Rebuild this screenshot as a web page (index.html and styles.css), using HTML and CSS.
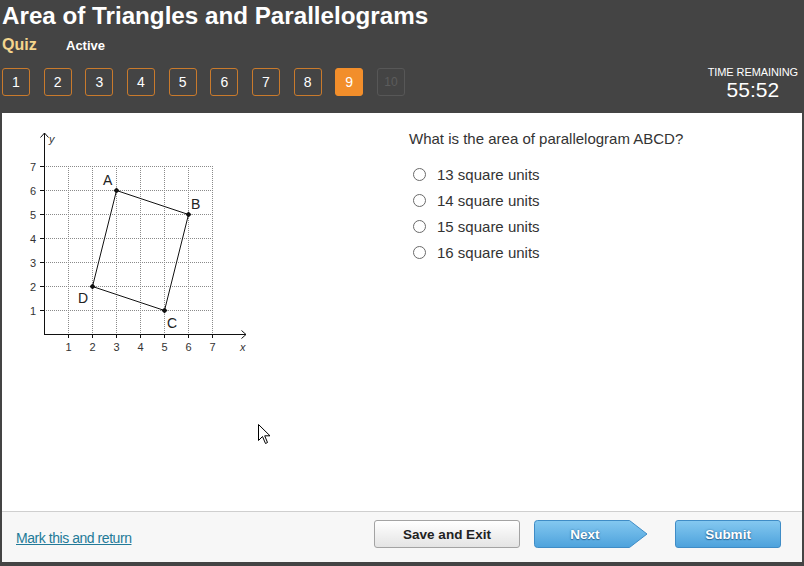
FILE: index.html
```html
<!DOCTYPE html>
<html>
<head>
<meta charset="utf-8">
<link rel="stylesheet" href="styles.css">
</head>
<body>
<div class="page">
  <header class="header">
    <h1 class="title">Area of Triangles and Parallelograms</h1>
    <div class="sub">
      <span class="quiz">Quiz</span>
      <span class="status">Active</span>
    </div>
    <div class="navrow">
      <div class="nums">
        <span class="num">1</span>
        <span class="num">2</span>
        <span class="num">3</span>
        <span class="num">4</span>
        <span class="num">5</span>
        <span class="num">6</span>
        <span class="num">7</span>
        <span class="num">8</span>
        <span class="num current">9</span>
        <span class="num disabled">10</span>
      </div>
      <div class="timer">
        <div class="timer-label">TIME REMAINING</div>
        <div class="timer-value">55:52</div>
      </div>
    </div>
  </header>

  <main class="main">
    <div class="graph">
      <svg width="240" height="230" viewBox="20 125 240 230" xmlns="http://www.w3.org/2000/svg">
        <g stroke="#8a8a8a" stroke-width="1" stroke-dasharray="1 1" fill="none">
          <line x1="44" y1="166.5" x2="212" y2="166.5"/>
          <line x1="44" y1="190.5" x2="212" y2="190.5"/>
          <line x1="44" y1="214.5" x2="212" y2="214.5"/>
          <line x1="44" y1="238.5" x2="212" y2="238.5"/>
          <line x1="44" y1="262.5" x2="212" y2="262.5"/>
          <line x1="44" y1="286.5" x2="212" y2="286.5"/>
          <line x1="44" y1="310.5" x2="212" y2="310.5"/>
          <line x1="68.5" y1="166" x2="68.5" y2="334"/>
          <line x1="92.5" y1="166" x2="92.5" y2="334"/>
          <line x1="116.5" y1="166" x2="116.5" y2="334"/>
          <line x1="140.5" y1="166" x2="140.5" y2="334"/>
          <line x1="164.5" y1="166" x2="164.5" y2="334"/>
          <line x1="188.5" y1="166" x2="188.5" y2="334"/>
          <line x1="212.5" y1="166" x2="212.5" y2="334"/>
        </g>
        <g stroke="#111" stroke-width="1" fill="none">
          <line x1="44.5" y1="133" x2="44.5" y2="334.5"/>
          <polyline points="40.5,137.5 44.5,133 48.5,137.5"/>
          <line x1="44" y1="334.5" x2="246" y2="334.5"/>
          <polyline points="241.5,330.5 246,334.5 241.5,338.5"/>
          <line x1="68.5" y1="334" x2="68.5" y2="338"/>
          <line x1="92.5" y1="334" x2="92.5" y2="338"/>
          <line x1="116.5" y1="334" x2="116.5" y2="338"/>
          <line x1="140.5" y1="334" x2="140.5" y2="338"/>
          <line x1="164.5" y1="334" x2="164.5" y2="338"/>
          <line x1="188.5" y1="334" x2="188.5" y2="338"/>
          <line x1="212.5" y1="334" x2="212.5" y2="338"/>
          <line x1="40" y1="166.5" x2="44" y2="166.5"/>
          <line x1="40" y1="190.5" x2="44" y2="190.5"/>
          <line x1="40" y1="214.5" x2="44" y2="214.5"/>
          <line x1="40" y1="238.5" x2="44" y2="238.5"/>
          <line x1="40" y1="262.5" x2="44" y2="262.5"/>
          <line x1="40" y1="286.5" x2="44" y2="286.5"/>
          <line x1="40" y1="310.5" x2="44" y2="310.5"/>
          <polygon points="116.5,190.5 188.5,214.5 164.5,310.5 92.5,286.5"/>
        </g>
        <g fill="#111">
          <polygon points="116.5,187.5 119.5,190.5 116.5,193.5 113.5,190.5"/>
          <polygon points="188.5,211.5 191.5,214.5 188.5,217.5 185.5,214.5"/>
          <polygon points="164.5,307.5 167.5,310.5 164.5,313.5 161.5,310.5"/>
          <polygon points="92.5,283.5 95.5,286.5 92.5,289.5 89.5,286.5"/>
        </g>
        <g class="ticklabel" text-anchor="middle">
          <text x="68.5" y="351">1</text>
          <text x="92.5" y="351">2</text>
          <text x="116.5" y="351">3</text>
          <text x="140.5" y="351">4</text>
          <text x="164.5" y="351">5</text>
          <text x="188.5" y="351">6</text>
          <text x="212.5" y="351">7</text>
        </g>
        <g class="ticklabel" text-anchor="middle">
          <text x="33" y="170.5">7</text>
          <text x="33" y="194.5">6</text>
          <text x="33" y="218.5">5</text>
          <text x="33" y="242.5">4</text>
          <text x="33" y="266.5">3</text>
          <text x="33" y="290.5">2</text>
          <text x="33" y="314.5">1</text>
        </g>
        <text class="axislabel" x="240" y="351">x</text>
        <text class="axislabel" x="49" y="143">y</text>
        <g class="ptlabel">
          <text x="103" y="185">A</text>
          <text x="191" y="209">B</text>
          <text x="167" y="328">C</text>
          <text x="78" y="303">D</text>
        </g>
      </svg>
    </div>

    <div class="question">
      <p class="prompt">What is the area of parallelogram ABCD?</p>
      <ul class="options">
        <li class="option"><span class="radio"></span><span>13 square units</span></li>
        <li class="option"><span class="radio"></span><span>14 square units</span></li>
        <li class="option"><span class="radio"></span><span>15 square units</span></li>
        <li class="option"><span class="radio"></span><span>16 square units</span></li>
      </ul>
    </div>

    <svg class="cursor" width="13" height="21" viewBox="0 0 13 21" xmlns="http://www.w3.org/2000/svg">
      <path d="M0.5 0.5 L0.5 16.5 L4.5 12.5 L7.5 19.5 L9.5 18.5 L6.7 11.8 L12 11.8 Z" fill="#fff" stroke="#000" stroke-width="1" stroke-linejoin="miter"/>
    </svg>
  </main>

  <footer class="footer">
    <a class="mark" href="#">Mark this and return</a>
    <div class="actions">
      <button class="btn save">Save and Exit</button>
      <button class="btn next">
        <svg class="next-shape" width="114" height="28" viewBox="0 0 114 28" xmlns="http://www.w3.org/2000/svg">
          <defs>
            <linearGradient id="blueg" x1="0" y1="0" x2="0" y2="1">
              <stop offset="0" stop-color="#84c8f0"/>
              <stop offset="1" stop-color="#4da2dc"/>
            </linearGradient>
          </defs>
          <path d="M3.5 0.5 H95.5 L113 14 L95.5 27.5 H3.5 Q0.5 27.5 0.5 24.5 V3.5 Q0.5 0.5 3.5 0.5 Z" fill="url(#blueg)" stroke="#3f8cc6" stroke-width="1"/>
        </svg>
        <span class="next-text">Next</span>
      </button>
      <button class="btn submit">Submit</button>
    </div>
  </footer>
</div>
</body>
</html>
```

FILE: styles.css
```css
* { box-sizing: border-box; }

html, body {
  margin: 0;
  padding: 0;
}

body {
  background: #444444;
  font-family: "Liberation Sans", Arial, sans-serif;
  width: 804px;
  height: 566px;
  overflow: hidden;
}

.page {
  width: 804px;
  height: 566px;
  display: flex;
  flex-direction: column;
}

.header {
  height: 113px;
  padding: 1px 6px 0 2px;
  color: #fff;
}

.title {
  margin: 0;
  font-size: 24.2px;
  font-weight: bold;
  line-height: 30px;
  height: 33px;
}

.sub {
  display: flex;
  align-items: baseline;
  height: 22px;
  line-height: 22px;
}

.quiz {
  font-size: 16px;
  font-weight: bold;
  color: #f4d58d;
  width: 64px;
}

.status {
  font-size: 13px;
  font-weight: bold;
  color: #fff;
}

.navrow {
  display: flex;
  justify-content: space-between;
  align-items: flex-start;
}

.nums {
  display: flex;
  gap: 13.67px;
  padding-top: 12px;
}

.num {
  width: 28px;
  height: 28px;
  border: 1px solid #c97a2c;
  border-radius: 3px;
  display: flex;
  align-items: center;
  justify-content: center;
  font-size: 14px;
  color: #fff;
}

.num.current {
  background: #f28e2b;
  border-color: #f28e2b;
}

.num.disabled {
  border-color: #575757;
  color: #5c5c5c;
  font-size: 12px;
}

.timer {
  text-align: center;
  padding-top: 10px;
}

.timer-label {
  font-size: 11px;
  line-height: 12px;
  color: #fff;
  letter-spacing: -0.1px;
}

.timer-value {
  font-size: 21px;
  line-height: 23px;
  color: #fff;
}

.main {
  position: relative;
  flex: 1;
  background: #fff;
  margin: 0 2px;
  display: flex;
  align-items: flex-start;
}

.graph {
  margin: 12px 0 0 18px;
  width: 240px;
  height: 230px;
}

.graph svg { display: block; }

.ticklabel text {
  font-family: "Liberation Sans", Arial, sans-serif;
  font-size: 11px;
  fill: #333;
}

.axislabel {
  font-family: "Liberation Sans", Arial, sans-serif;
  font-size: 11px;
  font-style: italic;
  fill: #333;
}

.ptlabel text {
  font-family: "Liberation Sans", Arial, sans-serif;
  font-size: 14px;
  fill: #222;
}

.question {
  margin-left: 149px;
  padding-top: 17px;
  color: #333;
}

.prompt {
  margin: 0;
  font-size: 15px;
  line-height: 18px;
}

.options {
  list-style: none;
  margin: 13px 0 0;
  padding: 0;
}

.option {
  display: flex;
  align-items: center;
  height: 26px;
  font-size: 15px;
}

.radio {
  width: 13px;
  height: 13px;
  border: 1px solid #6a6a6a;
  border-radius: 50%;
  margin: 0 11px 0 4px;
  background: #fff;
}

.cursor {
  position: absolute;
  left: 256px;
  top: 311px;
}

.footer {
  height: 51px;
  margin: 0 2px 4px;
  background: #f7f7f7;
  border-top: 1px solid #cfcfcf;
  display: flex;
  align-items: flex-start;
  justify-content: space-between;
  padding: 8px 21px 0 14px;
}

.mark {
  font-size: 14px;
  line-height: 16px;
  color: #237a98;
  text-decoration: underline;
  margin-top: 10px;
  letter-spacing: -0.45px;
}

.actions {
  display: flex;
  align-items: center;
}

.btn {
  height: 28px;
  font-family: "Liberation Sans", Arial, sans-serif;
  font-size: 13.5px;
  font-weight: bold;
  padding: 0;
  cursor: pointer;
}

.save {
  width: 146px;
  border: 1px solid #a3a3a3;
  border-radius: 3px;
  background: linear-gradient(#ffffff, #e4e4e4);
  color: #222;
  margin-right: 14px;
}

.next {
  position: relative;
  width: 114px;
  border: none;
  background: transparent;
  margin-right: 27px;
}

.next-shape {
  position: absolute;
  left: 0;
  top: 0;
}

.next-text {
  position: relative;
  display: block;
  padding-right: 12px;
  color: #fff;
  text-shadow: 0 0 2px #2a6a9a, 0 1px 1px #2a6a9a;
  text-align: center;
}

.submit {
  width: 106px;
  border: 1px solid #3f8cc6;
  border-radius: 3px;
  background: linear-gradient(#84c8f0, #4da2dc);
  color: #fff;
  text-shadow: 0 0 2px #2a6a9a, 0 1px 1px #2a6a9a;
}
```
